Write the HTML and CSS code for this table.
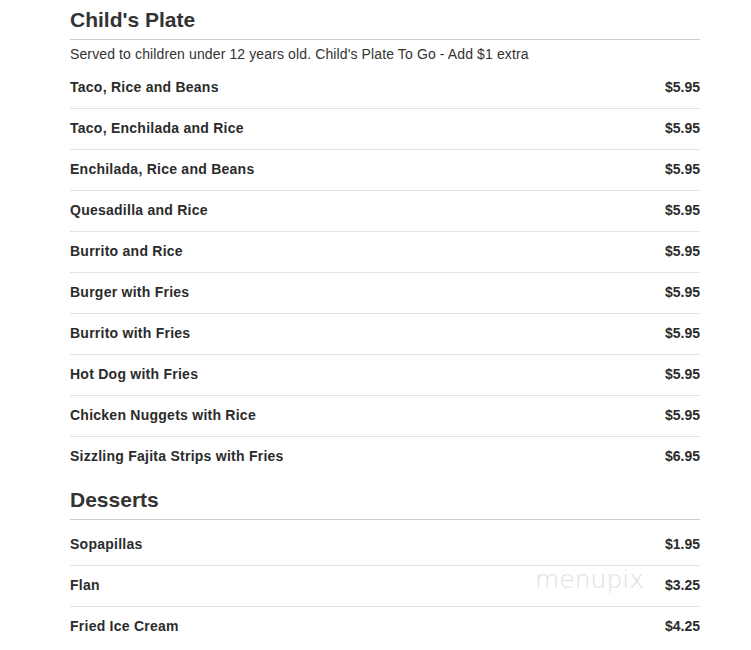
FILE: index.html
```html
<!DOCTYPE html>
<html>
<head>
<meta charset="utf-8">
<link rel="stylesheet" href="styles.css">
</head>
<body>
<div class="menu">
  <section class="section">
    <h2 class="section-title">Child's Plate</h2>
    <p class="section-desc">Served to children under 12 years old. Child's Plate To Go - Add $1 extra</p>
    <ul class="items">
      <li class="item"><span class="name">Taco, Rice and Beans</span><span class="price">$5.95</span></li>
      <li class="item"><span class="name">Taco, Enchilada and Rice</span><span class="price">$5.95</span></li>
      <li class="item"><span class="name">Enchilada, Rice and Beans</span><span class="price">$5.95</span></li>
      <li class="item"><span class="name">Quesadilla and Rice</span><span class="price">$5.95</span></li>
      <li class="item"><span class="name">Burrito and Rice</span><span class="price">$5.95</span></li>
      <li class="item"><span class="name">Burger with Fries</span><span class="price">$5.95</span></li>
      <li class="item"><span class="name">Burrito with Fries</span><span class="price">$5.95</span></li>
      <li class="item"><span class="name">Hot Dog with Fries</span><span class="price">$5.95</span></li>
      <li class="item"><span class="name">Chicken Nuggets with Rice</span><span class="price">$5.95</span></li>
      <li class="item"><span class="name">Sizzling Fajita Strips with Fries</span><span class="price">$6.95</span></li>
    </ul>
  </section>
  <section class="section section-desserts">
    <h2 class="section-title">Desserts</h2>
    <ul class="items">
      <li class="item"><span class="name">Sopapillas</span><span class="price">$1.95</span></li>
      <li class="item"><span class="name">Flan</span><span class="price">$3.25</span></li>
      <li class="item"><span class="name">Fried Ice Cream</span><span class="price">$4.25</span></li>
    </ul>
    <div class="watermark">menupix</div>
  </section>
</div>
</body>
</html>
```
FILE: styles.css
```css
html, body {
  margin: 0;
  padding: 0;
  background: #fff;
}
body {
  font-family: "Liberation Sans", Arial, sans-serif;
  color: #333;
}
.menu {
  width: 630px;
  margin-left: 70px;
  padding-top: 8px;
}
.section {
  position: relative;
}
.section-title {
  margin: 0;
  font-size: 21px;
  line-height: 24px;
  font-weight: bold;
  color: #333;
  padding-bottom: 7px;
  border-bottom: 1px solid #ccc;
}
.section-desc {
  margin: 0;
  padding-top: 4px;
  font-size: 14px;
  line-height: 20px;
  letter-spacing: 0.12px;
  color: #333;
}
.items {
  list-style: none;
  margin: 4px 0 0;
  padding: 0;
}
.section-desserts {
  margin-top: 11px;
}
.section-desserts .items {
  margin-top: 5px;
}
.item {
  display: flex;
  justify-content: space-between;
  padding: 9px 0 11px;
  line-height: 20px;
  font-size: 14px;
  font-weight: bold;
  color: #2b2b2b;
  border-bottom: 1px solid #e3e3e3;
}
.item:last-child {
  border-bottom: none;
}
.name {
  letter-spacing: 0.25px;
}
.watermark {
  position: absolute;
  left: 465px;
  top: 77px;
  font-family: "DejaVu Sans", sans-serif;
  font-weight: 200;
  font-size: 25px;
  letter-spacing: 0;
  color: #e0e0e0;
}
```
